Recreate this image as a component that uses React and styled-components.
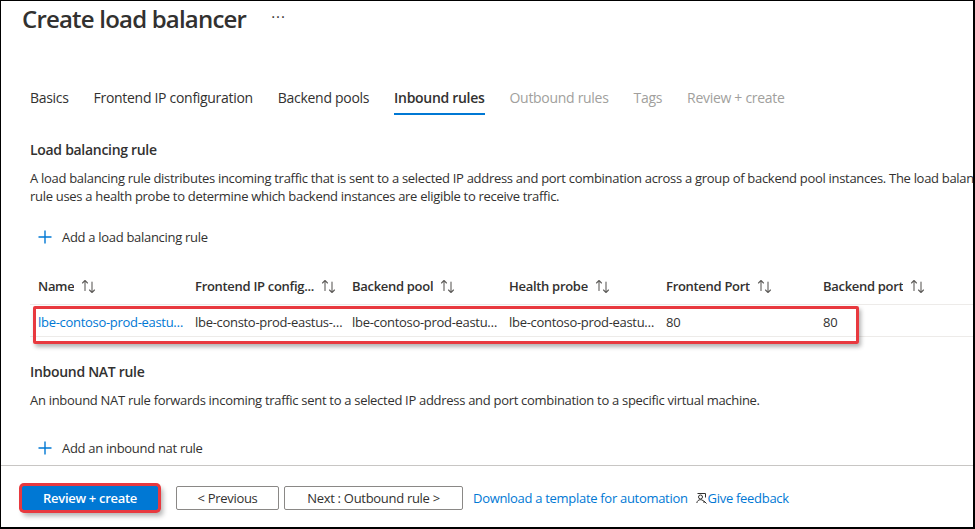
import React from "react";
import styled, { createGlobalStyle } from "styled-components";

const Global = createGlobalStyle`
  html, body { margin: 0; padding: 0; background: #fff; }
  body {
    font-family: "Segoe UI", "Open Sans", "Noto Sans", sans-serif;
    color: #323130;
    letter-spacing: -0.3px;
  }
  * { box-sizing: border-box; }
  button { letter-spacing: inherit; }
`;

const Frame = styled.div`
  width: 975px;
  height: 529px;
  border-style: solid;
  border-color: #000;
  border-width: 1px 2px 2px 1px;
  overflow: hidden;
  display: flex;
  flex-direction: column;
  background: #fff;
`;

const Header = styled.div`
  display: flex;
  align-items: center;
  padding: 2px 0 0 21px;
  height: 34px;
`;

const Title = styled.h1`
  margin: 0;
  font-size: 24px;
  line-height: 32px;
  font-weight: 600;
  letter-spacing: -0.8px;
  color: #323130;
  white-space: nowrap;
`;

const More = styled.span`
  margin-left: 25px;
  font-size: 15px;
  line-height: 20px;
  color: #323130;
  letter-spacing: 1px;
  margin-top: -6px;
`;

const Tabs = styled.nav`
  display: flex;
  margin: 53px 0 0 29px;
  gap: 25px;
`;

const Tab = styled.div`
  font-size: 14px;
  line-height: 20px;
  padding-bottom: 5px;
  white-space: nowrap;
  font-weight: ${p => (p.$active ? 600 : 400)};
  color: ${p => (p.$disabled ? "#a19f9d" : "#323130")};
  border-bottom: 2px solid ${p => (p.$active ? "#0078d4" : "transparent")};
`;

const Body = styled.main`
  flex: 1;
  padding-left: 29px;
  display: flex;
  flex-direction: column;
`;

const SectionTitle = styled.h2`
  margin: ${p => p.$top}px 0 0 0;
  font-size: 14px;
  line-height: 20px;
  font-weight: 600;
  color: #323130;
`;

const Desc = styled.p`
  margin: 9px 0 0 0;
  font-size: 13px;
  line-height: 18px;
  color: #323130;
  white-space: nowrap;
`;

const AddButton = styled.button`
  margin: ${p => p.$top}px 0 0 8px;
  padding: 0;
  border: 0;
  background: none;
  display: flex;
  align-items: center;
  gap: 10px;
  font-family: inherit;
  font-size: 13px;
  line-height: 20px;
  color: #323130;
  align-self: flex-start;
  cursor: pointer;
`;

const Table = styled.div`
  margin-top: 21px;
  position: relative;
`;

const HeadRow = styled.div`
  display: grid;
  grid-template-columns: repeat(6, 157px) 1fr;
  height: 37px;
  border-bottom: 1px solid #edebe9;
  align-items: center;
`;

const DataRow = styled.div`
  display: grid;
  grid-template-columns: repeat(6, 157px) 1fr;
  height: 32px;
  padding-top: 2px;
  border-bottom: 1px solid #edebe9;
  align-items: center;
`;

const HeadCell = styled.div`
  display: flex;
  align-items: center;
  padding-left: 8px;
  min-width: 0;
  font-size: 13px;
  font-weight: 600;
  color: #323130;
`;

const HeadText = styled.span`
  overflow: hidden;
  white-space: nowrap;
  text-overflow: ellipsis;
  min-width: 0;
`;

const Cell = styled.div`
  padding-left: 8px;
  min-width: 0;
  overflow: hidden;
  white-space: nowrap;
  text-overflow: ellipsis;
  font-size: 13px;
  color: ${p => (p.$link ? "#0078d4" : "#323130")};
`;

const Highlight = styled.div`
  position: absolute;
  left: 3px;
  top: 38px;
  width: 826px;
  height: 38px;
  border: 3px solid #e8393f;
  border-radius: 2px;
  box-shadow: 2px 3px 4px rgba(0, 0, 0, 0.3);
  pointer-events: none;
`;

const Footer = styled.footer`
  height: 62px;
  border-top: 1px solid #c8c6c4;
  display: flex;
  align-items: flex-start;
  padding: 20px 0 0 21px;
`;

const Button = styled.button`
  height: 24px;
  width: ${p => p.$w}px;
  margin-left: ${p => p.$ml || 0}px;
  font-family: inherit;
  font-size: 13px;
  line-height: 20px;
  padding: 0;
  border-radius: 2px;
  cursor: pointer;
  white-space: nowrap;
  font-weight: ${p => (p.$primary ? 600 : 400)};
  color: ${p => (p.$primary ? "#fff" : "#323130")};
  background: ${p => (p.$primary ? "#0078d4" : "#fff")};
  border: 1px solid ${p => (p.$primary ? "#0078d4" : "#8a8886")};
  box-shadow: ${p =>
    p.$marked ? "0 0 0 3px #e8393f, 3px 4px 5px 2px rgba(0,0,0,0.3)" : "none"};
`;

const Link = styled.a`
  margin-left: ${p => p.$ml}px;
  font-size: 13px;
  line-height: 24px;
  color: #0078d4;
  text-decoration: none;
  display: flex;
  align-items: center;
  white-space: nowrap;
  cursor: pointer;
`;

const SortIcon = () => (
  <svg width="16" height="16" viewBox="0 0 16 16" style={{ marginLeft: 7, flex: "none" }}>
    <g fill="none" stroke="#605e5c" strokeWidth="1.1" strokeLinecap="round" strokeLinejoin="round">
      <path d="M4 2.5v10M1.5 5l2.5-2.5L6.5 5" />
      <path d="M11 4v10.5M8.5 12l2.5 2.5 2.5-2.5" />
    </g>
  </svg>
);

const PlusIcon = () => (
  <svg width="14" height="14" viewBox="0 0 14 14">
    <path d="M7 0.5v13M0.5 7h13" stroke="#0078d4" strokeWidth="1.4" fill="none" />
  </svg>
);

const FeedbackIcon = () => (
  <svg width="11" height="12" viewBox="0 0 11 12" style={{ marginRight: 1 }}>
    <g fill="none" stroke="#323130" strokeWidth="1">
      <path d="M1.5 1.5h8v4" />
      <circle cx="4.5" cy="5" r="2" />
      <path d="M0.8 11c0.4-2.2 1.8-3.3 3.7-3.3s3.3 1.1 3.7 3.3" />
      <path d="M7.5 8.5l3 3" />
    </g>
  </svg>
);

const columns = ["Name", "Frontend IP config...", "Backend pool", "Health probe", "Frontend Port", "Backend port"];

export default function App() {
  return (
    <>
      <Global />
      <Frame>
        <Header>
          <Title>Create load balancer</Title>
          <More>···</More>
        </Header>
        <Tabs>
          <Tab>Basics</Tab>
          <Tab>Frontend IP configuration</Tab>
          <Tab>Backend pools</Tab>
          <Tab $active>Inbound rules</Tab>
          <Tab $disabled>Outbound rules</Tab>
          <Tab $disabled>Tags</Tab>
          <Tab $disabled>Review + create</Tab>
        </Tabs>
        <Body>
          <SectionTitle $top={25}>Load balancing rule</SectionTitle>
          <Desc>
            A load balancing rule distributes incoming traffic that is sent to a selected IP address and port combination across a group of backend pool instances. The load balancer
            <br />
            rule uses a health probe to determine which backend instances are eligible to receive traffic.
          </Desc>
          <AddButton $top={22}>
            <PlusIcon />
            Add a load balancing rule
          </AddButton>
          <Table>
            <HeadRow>
              {columns.map(c => (
                <HeadCell key={c}>
                  <HeadText>{c}</HeadText>
                  <SortIcon />
                </HeadCell>
              ))}
              <div />
            </HeadRow>
            <DataRow>
              <Cell $link>lbe-contoso-prod-eastus-rule</Cell>
              <Cell>lbe-consto-prod-eastus-frontend</Cell>
              <Cell>lbe-contoso-prod-eastus-pool</Cell>
              <Cell>lbe-contoso-prod-eastus-probe</Cell>
              <Cell>80</Cell>
              <Cell>80</Cell>
              <div />
            </DataRow>
            <Highlight />
          </Table>
          <SectionTitle $top={25}>Inbound NAT rule</SectionTitle>
          <Desc>
            An inbound NAT rule forwards incoming traffic sent to a selected IP address and port combination to a specific virtual machine.
          </Desc>
          <AddButton $top={29}>
            <PlusIcon />
            Add an inbound nat rule
          </AddButton>
        </Body>
        <Footer>
          <Button $primary $marked $w={136}>Review + create</Button>
          <Button $w={103} $ml={18}>&lt; Previous</Button>
          <Button $w={179} $ml={5}>Next : Outbound rule &gt;</Button>
          <Link $ml={10}>Download a template for automation</Link>
          <Link $ml={8}>
            <FeedbackIcon />
            Give feedback
          </Link>
        </Footer>
      </Frame>
    </>
  );
}
